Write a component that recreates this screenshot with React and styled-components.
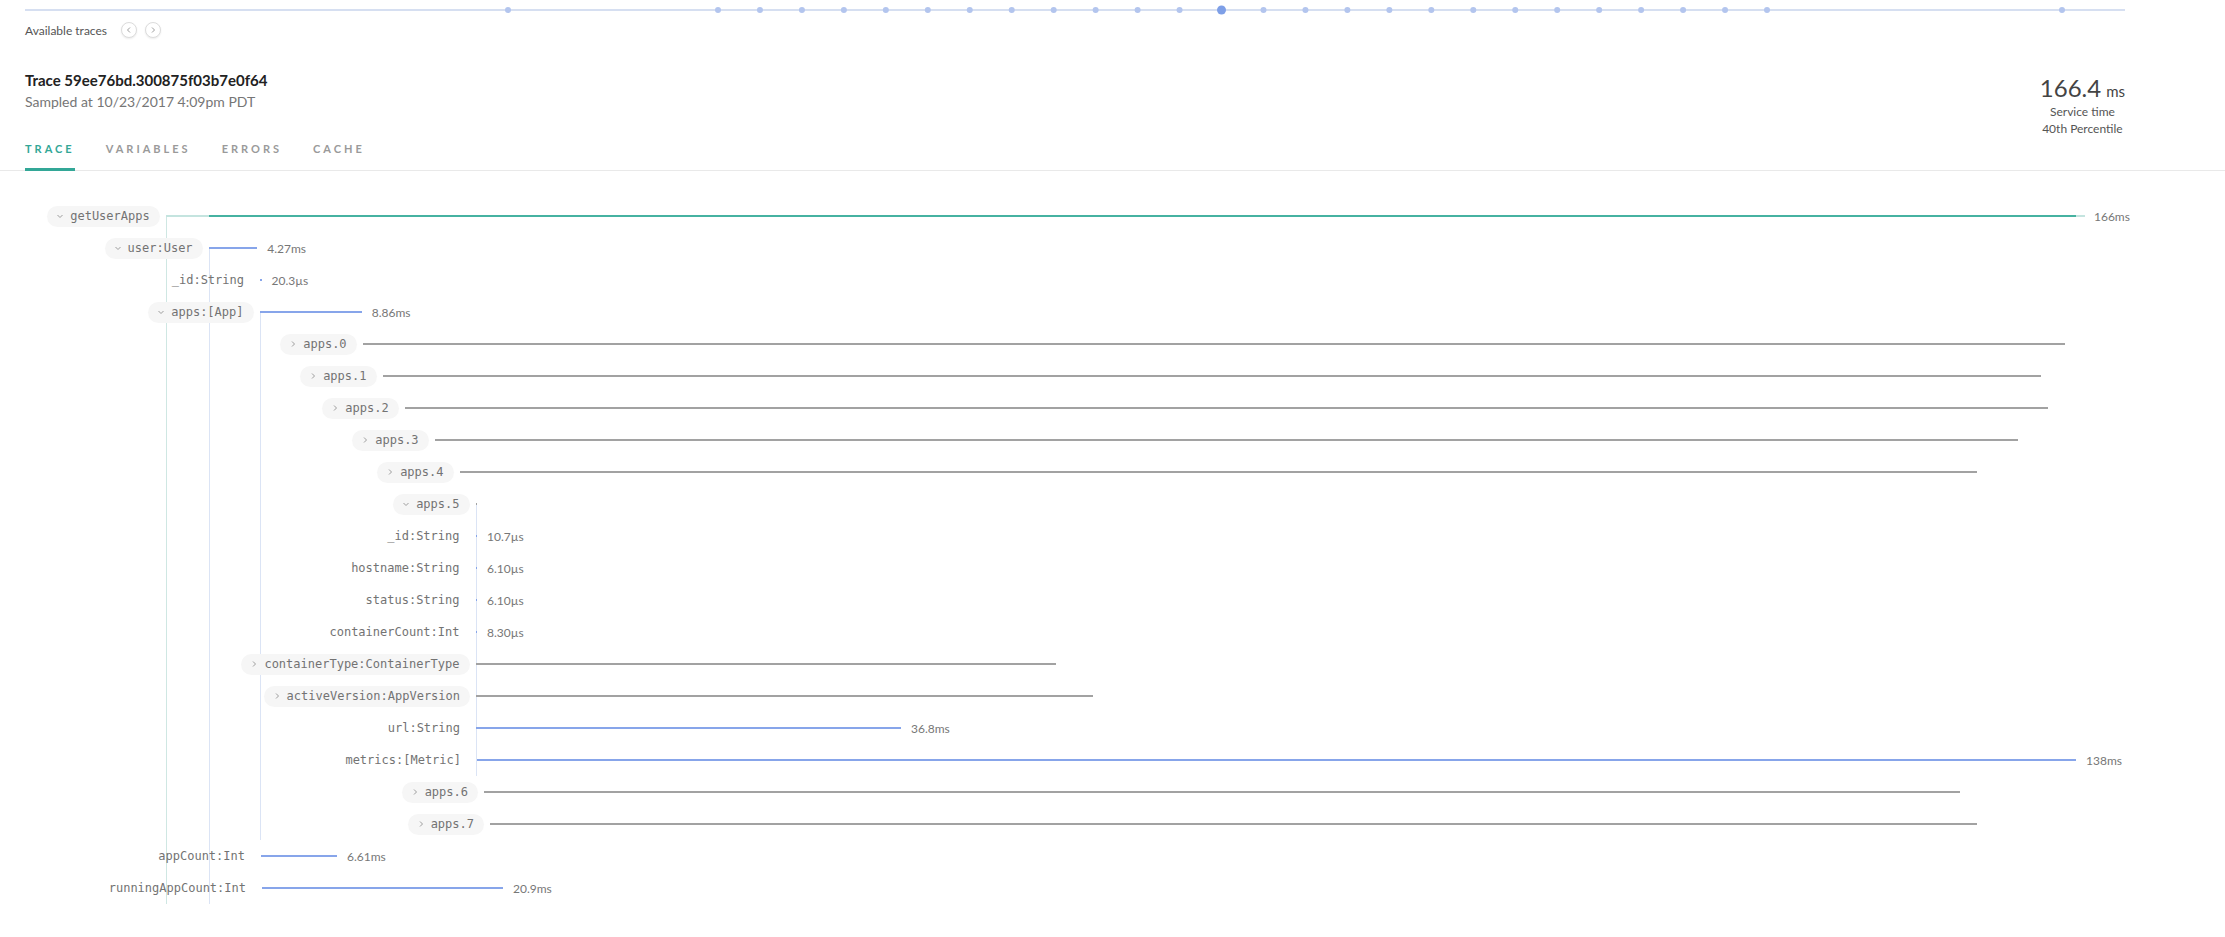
import React from 'react'
import styled, { createGlobalStyle } from 'styled-components';

// x positions below are page pixels on the trace time axis
const traceDots = [483, ...Array.from({ length: 26 }, (_, i) => 693 + i * 41.96), 2037];
const currentDot = 13;

const rows = [
	{ name: 'getUserApps', kind: 'open', start: 165.7, lead: 208.6, end: 2076, tail: 2085, tone: 'teal', value: '166ms' },
	{ name: 'user:User', kind: 'open', start: 208.6, end: 257.2, tone: 'blue', value: '4.27ms' },
	{ name: '_id:String', kind: 'leaf', start: 260, end: 261.5, tone: 'blue', value: '20.3µs' },
	{ name: 'apps:[App]', kind: 'open', start: 259.5, end: 361.7, tone: 'blue', value: '8.86ms' },
	{ name: 'apps.0', kind: 'closed', start: 362.6, end: 2065, tone: 'gray' },
	{ name: 'apps.1', kind: 'closed', start: 382.5, end: 2041, tone: 'gray' },
	{ name: 'apps.2', kind: 'closed', start: 404.7, end: 2048, tone: 'gray' },
	{ name: 'apps.3', kind: 'closed', start: 434.6, end: 2018, tone: 'gray' },
	{ name: 'apps.4', kind: 'closed', start: 459.5, end: 1977, tone: 'gray' },
	{ name: 'apps.5', kind: 'open', start: 475.5, end: 477, tone: 'gray' },
	{ name: '_id:String', kind: 'leaf', start: 475.5, end: 477, tone: 'blue', value: '10.7µs' },
	{ name: 'hostname:String', kind: 'leaf', start: 475.5, end: 477, tone: 'blue', value: '6.10µs' },
	{ name: 'status:String', kind: 'leaf', start: 475.5, end: 477, tone: 'blue', value: '6.10µs' },
	{ name: 'containerCount:Int', kind: 'leaf', start: 475.5, end: 477, tone: 'blue', value: '8.30µs' },
	{ name: 'containerType:ContainerType', kind: 'closed', start: 475.5, end: 1056, tone: 'gray' },
	{ name: 'activeVersion:AppVersion', kind: 'closed', start: 476, end: 1093, tone: 'gray' },
	{ name: 'url:String', kind: 'leaf', start: 476, end: 901, tone: 'blue', value: '36.8ms' },
	{ name: 'metrics:[Metric]', kind: 'leaf', start: 477, end: 2076, tone: 'blue', value: '138ms' },
	{ name: 'apps.6', kind: 'closed', start: 484, end: 1960, tone: 'gray' },
	{ name: 'apps.7', kind: 'closed', start: 490, end: 1977, tone: 'gray' },
	{ name: 'appCount:Int', kind: 'leaf', start: 261, end: 337, tone: 'blue', value: '6.61ms' },
	{ name: 'runningAppCount:Int', kind: 'leaf', start: 262, end: 503, tone: 'blue', value: '20.9ms' },
];

// guide lines: parent start x, from its row to the last row below it
const guides = [
	{ x: 165.7, from: 0, to: 21, tone: 'teal' },
	{ x: 208.6, from: 1, to: 21, tone: 'blue' },
	{ x: 259.5, from: 3, to: 19, tone: 'blue' },
	{ x: 475.5, from: 9, to: 17, tone: 'blue' },
];

const ROW = 32;

const tones = {
	teal: '#46b2a1',
	blue: '#87a5ea',
	gray: '#a2a2a2',
};

const Chevron = ({ dir }) => {
	const points = {
		down: '1.5,3 4,5.5 6.5,3',
		right: '3,1.5 5.5,4 3,6.5',
		left: '5,1.5 2.5,4 5,6.5',
	}[dir];
	return (
		<svg width="8" height="8" viewBox="0 0 8 8">
			<polyline points={points} fill="none" stroke="#9d9d9d" strokeWidth="1" />
		</svg>
	);
};

const TraceTimeline = () => (
	<TimelineSvg width="2100" height="12" viewBox="0 0 2100 12">
		<line x1="0" y1="6" x2="2100" y2="6" stroke="#d6dff1" strokeWidth="2" />
		{traceDots.map((x, i) => (
			i === currentDot
				? <circle key={i} cx={x} cy="6" r="4.5" fill="#7e9fe7" />
				: <circle key={i} cx={x} cy="6" r="3" fill="#b3c5ee" />
		))}
	</TimelineSvg>
);

const TraceRow = ({ row }) => {
	const pill = row.kind !== 'leaf';
	return (
		<Row>
			<LabelCell style={{ width: row.start - 6 }}>
				<Label $pill={pill}>
					{pill && <ChevronBox><Chevron dir={row.kind === 'open' ? 'down' : 'right'} /></ChevronBox>}
					{row.name}
				</Label>
			</LabelCell>
			<BarTrack>
				{row.lead && <Bar $color="#c4e4df" style={{ width: row.lead - row.start }} />}
				<Bar $color={tones[row.tone]} style={{ width: row.end - (row.lead || row.start) }} />
				{row.tail && <Bar $color="#c4e4df" style={{ width: row.tail - row.end }} />}
				{row.value && <Value $tight={!!row.tail}>{row.value}</Value>}
			</BarTrack>
		</Row>
	);
};

const App = () => {
	return (
		<Page>
			<GlobalStyle />
			<Header>
				<TraceTimeline />
				<Picker>
					<PickerLabel>Available traces</PickerLabel>
					<RoundButton><Chevron dir="left" /></RoundButton>
					<RoundButton><Chevron dir="right" /></RoundButton>
				</Picker>
				<InfoRow>
					<div>
						<Title>Trace 59ee76bd.300875f03b7e0f64</Title>
						<Sampled>Sampled at 10/23/2017 4:09pm PDT</Sampled>
					</div>
					<Stat>
						<StatValue>166.4<StatUnit>ms</StatUnit></StatValue>
						<StatLabel>Service time</StatLabel>
						<StatLabel>40th Percentile</StatLabel>
					</Stat>
				</InfoRow>
				<Tabs>
					<Tab $active>TRACE</Tab>
					<Tab>VARIABLES</Tab>
					<Tab>ERRORS</Tab>
					<Tab>CACHE</Tab>
				</Tabs>
			</Header>

			<Tree>
				{guides.map((g, i) => (
					<Guide
						key={i}
						$tone={g.tone}
						style={{ left: g.x, top: g.from * ROW + ROW / 2, height: (g.to - g.from) * ROW + ROW / 2 }}
					/>
				))}
				{rows.map((row, i) => <TraceRow key={i} row={row} />)}
			</Tree>
		</Page>
	);
};

export default App;


const GlobalStyle = createGlobalStyle`
	html, body {
		margin: 0;
		padding: 0;
		background: #fff;
	}
	body {
		font-family: Lato, "Open Sans", sans-serif;
		color: #333;
		overflow: hidden;
	}
`;

const Page = styled.div`
	width: 2225px;
	min-height: 937px;
`;

const Header = styled.header`
	padding: 4px 100px 0 25px;
	border-bottom: 1px solid #e9e9e9;
`;

const TimelineSvg = styled.svg`
	display: block;
`;

const Picker = styled.div`
	display: flex;
	align-items: center;
	height: 16px;
	margin-top: 6px;
`;

const PickerLabel = styled.span`
	font-size: 12px;
	color: #555;
	margin-right: 14px;
`;

const RoundButton = styled.button`
	width: 16px;
	height: 16px;
	padding: 0;
	margin-right: 8px;
	border: 1px solid #dcdcdc;
	border-radius: 50%;
	background: #fff;
	box-shadow: 0 1px 2px rgba(0, 0, 0, 0.08);
	display: flex;
	align-items: center;
	justify-content: center;
`;

const InfoRow = styled.div`
	display: flex;
	justify-content: space-between;
	align-items: flex-start;
	margin-top: 32px;
`;

const Title = styled.div`
	font-size: 15px;
	line-height: 20px;
	font-weight: 700;
	color: #222;
`;

const Sampled = styled.div`
	margin-top: 2px;
	font-size: 14px;
	line-height: 20px;
	color: #767676;
`;

const Stat = styled.div`
	padding-top: 6px;
	text-align: center;
	color: #444;
`;

const StatValue = styled.div`
	font-size: 24px;
	line-height: 24px;
	color: #444;
`;

const StatUnit = styled.span`
	font-size: 15px;
	margin-left: 5px;
`;

const StatLabel = styled.div`
	font-size: 12px;
	line-height: 17px;
	color: #555;
`;

const Tabs = styled.nav`
	display: flex;
	gap: 31px;
	margin-top: 5px;
`;

const Tab = styled.div`
	font-size: 11px;
	line-height: 14px;
	font-weight: 700;
	letter-spacing: 3px;
	color: ${p => p.$active ? '#33a797' : '#9a9a9a'};
	padding-bottom: 12px;
	border-bottom: 3px solid ${p => p.$active ? '#33a797' : 'transparent'};
	margin-bottom: -1px;
`;

const Tree = styled.section`
	position: relative;
	margin-top: 29px;
`;

const Guide = styled.div`
	position: absolute;
	width: 1px;
	background: ${p => p.$tone === 'teal' ? '#cfe7e3' : '#dbe4f5'};
`;

const Row = styled.div`
	position: relative;
	z-index: 1;
	display: flex;
	align-items: center;
	height: 32px;
`;

const LabelCell = styled.div`
	flex: none;
	display: flex;
	justify-content: flex-end;
	margin-right: 6px;
`;

const Label = styled.div`
	display: inline-flex;
	align-items: center;
	height: 21px;
	padding: 0 10px 0 ${p => p.$pill ? '9px' : '0'};
	border-radius: 11px;
	background: ${p => p.$pill ? '#f6f6f6' : 'transparent'};
	font-family: "DejaVu Sans Mono", "Liberation Mono", monospace;
	font-size: 12px;
	color: #737373;
	white-space: nowrap;
`;

const ChevronBox = styled.span`
	display: flex;
	margin-right: 6px;
`;

const BarTrack = styled.div`
	display: flex;
	align-items: center;
`;

const Bar = styled.div`
	flex: none;
	height: 2px;
	background: ${p => p.$color};
`;

const Value = styled.span`
	margin-left: ${p => p.$tight ? '9px' : '10px'};
	font-size: 12px;
	color: #777;
	white-space: nowrap;
`;
